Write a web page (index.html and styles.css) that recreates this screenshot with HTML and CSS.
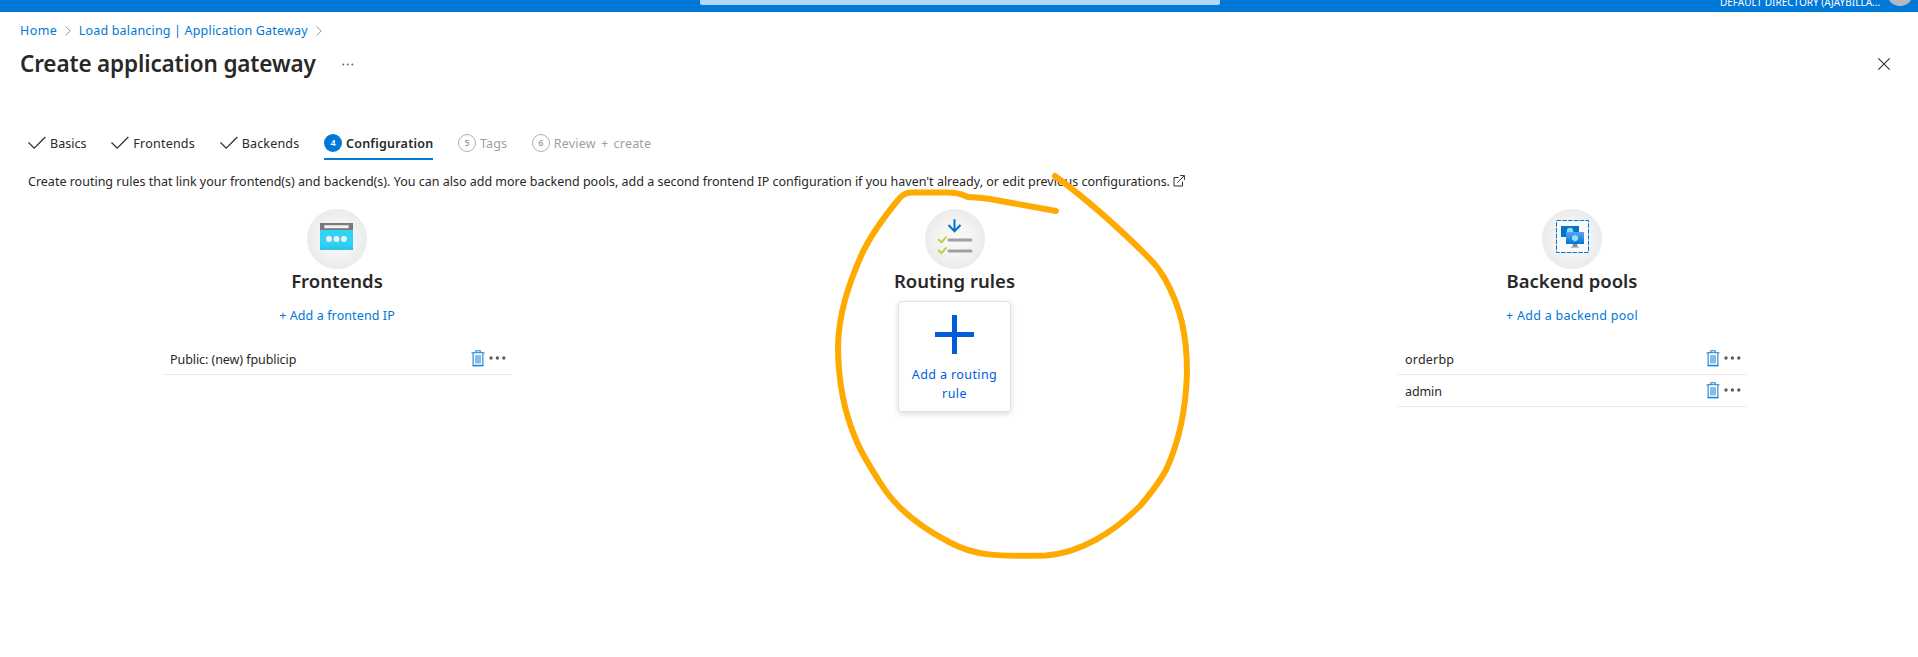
FILE: index.html
```html
<!DOCTYPE html>
<html lang="en">
<head>
<meta charset="utf-8">
<title>Create application gateway</title>
<link rel="stylesheet" href="styles.css">
</head>
<body>
<svg class="defs" aria-hidden="true">
  <defs>
    <radialGradient id="disc"><stop offset="0" stop-color="#f8f8f8"/><stop offset=".5" stop-color="#f5f5f5"/><stop offset="1" stop-color="#ebebeb"/></radialGradient>
    <linearGradient id="cyan" x1="0" y1="0" x2="0" y2="1"><stop offset="0" stop-color="#32d4f5"/><stop offset=".6" stop-color="#32d4f5"/><stop offset="1" stop-color="#2cc3e3"/></linearGradient>
    <linearGradient id="screen" x1="0" y1="1" x2="0" y2="0"><stop offset="0" stop-color="#0078d4"/><stop offset="1" stop-color="#5ea0ef"/></linearGradient>
    <symbol id="trash" viewBox="0 0 14 17"><path d="M2.2 3v12.5h9.6V3" fill="#fff" stroke="#5fa9e4" stroke-width="1.6"/><path d="M4 5h6v8.5H4z" fill="#83bdeb"/><path d="M.5 2.7h13M4.8 2.2V.8h4.4v1.4M1.8 15.6h10.4" fill="none" stroke="#1683d8" stroke-width="1.1"/></symbol>
    <symbol id="dots" viewBox="0 0 17 4"><g fill="#605e5c"><circle cx="2" cy="2" r="1.7"/><circle cx="8.4" cy="2" r="1.7"/><circle cx="14.8" cy="2" r="1.7"/></g></symbol>
    <symbol id="check" viewBox="0 0 18 14"><path d="M.5 6.5L6.2 12.2L17.3 1" fill="none" stroke="#323130" stroke-width="1.3"/></symbol>
    <symbol id="chevron" viewBox="0 0 6 10"><path d="M.6 .5L5.2 5L.6 9.5" fill="none" stroke="#979593" stroke-width="1"/></symbol>
  </defs>
</svg>
<header class="topbar">
  <div class="search"></div>
  <div class="account"><span class="directory">DEFAULT DIRECTORY (AJAYBILLA...</span><span class="avatar"></span></div>
</header>
<nav class="breadcrumb">
  <a class="home">Home</a><svg class="chev"><use href="#chevron"/></svg>
  <a class="parent">Load balancing | Application Gateway</a><svg class="chev"><use href="#chevron"/></svg>
</nav>
<div class="titlebar">
  <h1>Create application gateway</h1>
  <svg class="more" viewBox="0 0 12 3"><g fill="#605e5c"><circle cx="1.3" cy="1.5" r=".9"/><circle cx="5.8" cy="1.5" r=".9"/><circle cx="10.3" cy="1.5" r=".9"/></g></svg>
  <svg class="close" viewBox="0 0 12 12"><path d="M.3 .3L11.7 11.7M11.7 .3L.3 11.7" stroke="#323130" stroke-width="1.1"/></svg>
</div>
<div class="tabs">
  <div class="tab"><svg class="check"><use href="#check"/></svg><span class="t-basics">Basics</span></div>
  <div class="tab"><svg class="check"><use href="#check"/></svg><span class="t-front">Frontends</span></div>
  <div class="tab"><svg class="check"><use href="#check"/></svg><span class="t-back">Backends</span></div>
  <div class="tab active"><i class="step">4</i><span class="t-conf">Configuration</span></div>
  <div class="tab pending"><i class="step">5</i><span class="t-tags">Tags</span></div>
  <div class="tab pending"><i class="step">6</i><span class="t-review">Review + create</span></div>
</div>
<p class="intro"><span class="intro-text">Create routing rules that link your frontend(s) and backend(s). You can also add more backend pools, add a second frontend IP configuration if you haven't already, or edit previous configurations.</span><svg class="external" viewBox="0 0 12 12"><path d="M5.5 2.5H1v8.500h8.500V6.500M7 .6h4.400V5M11.300 .7L4.500 7.500" fill="none" stroke="#323130"/></svg></p>
<main class="columns">
  <section class="column">
    <svg class="disc" viewBox="0 0 60 60"><circle cx="30" cy="30" r="30" fill="url(#disc)"/><path d="M13 14h33v8H13z" fill="#797979"/><path d="M17.3 16.2h24.4v3H17.3z" fill="#f2f2f2"/><path d="M13 21h33v20H13z" fill="url(#cyan)"/><g fill="#f2f2f2"><circle cx="22" cy="30" r="2.9"/><circle cx="29.5" cy="30" r="2.9"/><circle cx="37" cy="30" r="2.9"/></g></svg>
    <h2 class="h-front">Frontends</h2>
    <a class="add a-front">+ Add a frontend IP</a>
    <ul>
      <li><span class="name n-public">Public: (new) fpublicip</span><svg class="trash"><use href="#trash"/></svg><svg class="dots"><use href="#dots"/></svg></li>
    </ul>
  </section>
  <section class="column">
    <svg class="disc" viewBox="0 0 60 60"><circle cx="30" cy="30" r="30" fill="url(#disc)"/><path d="M29.5 10.3v12M23.500 16l6 6.200 6-6.200" fill="none" stroke="#0072c9" stroke-width="2"/><path d="M24 31h22M24 42h22" stroke="#a0a0a0" stroke-width="3" stroke-linecap="round"/><path d="M13.200 30.200l3.300 3.200 5-5.900M13.200 41l3.300 3.200 5-5.900" fill="none" stroke="#b4d333" stroke-width="1.8"/></svg>
    <h2>Routing rules</h2>
    <div class="card"><svg class="plus" viewBox="0 0 39 39"><path d="M19.5 0v39M0 19.500h39" stroke="#015cda" stroke-width="5"/></svg><span class="card-text">Add a routing<br>rule</span></div>
  </section>
  <section class="column">
    <svg class="disc" viewBox="0 0 60 60"><circle cx="30" cy="30" r="30" fill="url(#disc)"/><rect x="14.5" y="11.5" width="32" height="32" fill="#fafafa" stroke="#0078d4" stroke-dasharray="4.6 1.2"/><path d="M19 17h18v11H19z" fill="#0072cf"/><circle cx="28" cy="22" r="3.2" fill="#7ee0f5"/><path d="M24 23h18v12H24z" fill="url(#screen)"/><path d="M33 26l3 1.600v3.200L33 32.500l-3-1.700v-3.200z" fill="#8ee4f7"/><path d="M31 35h4l.5 3h-5z" fill="#888"/><path d="M29 37.600h8v1.200h-8z" fill="#b3b3b3"/></svg>
    <h2 class="h-pools">Backend pools</h2>
    <a class="add a-back">+ Add a backend pool</a>
    <ul>
      <li><span class="name n-order">orderbp</span><svg class="trash"><use href="#trash"/></svg><svg class="dots"><use href="#dots"/></svg></li>
      <li><span class="name n-admin">admin</span><svg class="trash"><use href="#trash"/></svg><svg class="dots"><use href="#dots"/></svg></li>
    </ul>
  </section>
</main>
<svg class="scribble" viewBox="800 160 420 410"><path d="M1056 211L990 199C980 197.500 975 197.500 968 197C963 195 960 192.500 947 192.500H911C905 192.500 901 196 898 200C880 222 869 238 861 256C847 288 839 315 838 345C838 382 844 413 857 442C862 454 872 470 881 484C896 508 920 527 949 542C975 556 995 556.500 1046 555.500C1080 553 1113 533 1140 506C1152 492 1159 483 1166 470C1181 438 1186 405 1187 373C1187 335 1181 308 1165 279C1161 272 1155 264 1149 258C1117 226 1085 198 1055 176" fill="none" stroke="#ffaa01" stroke-width="6" stroke-linecap="round" stroke-linejoin="round"/></svg>
</body>
</html>
```
FILE: styles.css
```css
* { box-sizing: border-box; }
body { margin: 0; height: 657px; overflow: hidden; background: #fff; color: #292827; font: 12.5px/20px "Noto Sans", "Open Sans", sans-serif; position: relative; }
svg { display: block; flex: none; }
.defs { position: absolute; width: 0; height: 0; }
a { color: #0078d4; }
span, h1, h2, a { white-space: nowrap; }
.topbar { height: 12px; background: #0078d7; overflow: hidden; display: flex; padding-left: 700px; }
.search { width: 520px; height: 5px; background: #b3d6f2; border-radius: 0 0 2px 2px; }
.account { margin-left: auto; display: flex; width: 198px; }
.directory { color: #fff; font-size: 10px; line-height: 14px; margin-top: -5px; width: 167px; height: 14px; }
.avatar { width: 26px; height: 26px; border-radius: 50%; background: #b5b9bd; margin-top: -20px; }
.breadcrumb { display: flex; align-items: center; height: 36px; padding: 1px 0 0 20px; }
.home { letter-spacing: .4px; }
.parent { letter-spacing: .18px; }
.chev { width: 6px; height: 10px; margin: 1px 7.8px 0; }
.titlebar { display: flex; align-items: center; height: 32px; padding: 0 28px 0 20px; }
h1 { margin: 0; font-size: 22.5px; line-height: 32px; font-weight: 600; letter-spacing: -.15px; width: 322px; }
.more { width: 12px; height: 3px; }
.close { width: 12px; height: 12px; margin-left: auto; }
.tabs { display: flex; margin: 48px 0 0 28px; height: 32px; gap: 24.7px; }
.tab { display: flex; align-items: center; height: 32px; }
.check { width: 18px; height: 14px; margin: -2px 4px 0 0; }
.step { width: 18px; height: 18px; border-radius: 50%; margin: -2px 4px 0 0; font: 600 9px/18px "Noto Sans", sans-serif; text-align: center; color: #fff; background: #0078d7; flex: none; }
.active { font-weight: 600; border-bottom: 2px solid #0078d4; }
.active .step { margin-top: 0; }
.active span { padding-top: 2px; }
.pending { color: #a19f9d; }
.pending .step { background: #fff; color: #a19f9d; border: 1px solid #b3b0ad; line-height: 16px; }
.t-basics { letter-spacing: .05px; }
.t-front, .t-conf { letter-spacing: .22px; }
.t-tags { letter-spacing: .1px; }
.t-back { letter-spacing: .18px; }
.t-review { letter-spacing: .2px; word-spacing: 1.8px; }
.intro { display: flex; align-items: center; margin: 12px 0 0 28px; height: 20px; }
.external { width: 12px; height: 12px; margin: -3px 0 0 3px; }
.columns { display: flex; gap: 267.5px; padding: 17px 0 0 162px; }
.column { width: 350px; display: flex; flex-direction: column; align-items: center; }
.disc { width: 60px; height: 60px; }
h2 { margin: 0; font-size: 18.5px; line-height: 24px; font-weight: 600; }
.add { margin-top: 13px; letter-spacing: .1px; }
.a-back { letter-spacing: .27px; }
ul { list-style: none; margin: 17px 0 0; padding: 0; width: 100%; }
li { display: flex; align-items: center; height: 32px; border-bottom: 1px solid #edebe9; padding: 0 5px 0 8px; }
.name { padding-top: 3px; }
.n-public { letter-spacing: -.07px; }
.n-order { letter-spacing: .2px; }
.n-admin { letter-spacing: -.1px; }
.trash { width: 14px; height: 17px; margin: -1px 0 0 auto; }
.dots { width: 17px; height: 4px; margin: -2px 1px 0 4px; }
.card { width: 113px; height: 111px; margin-top: 8px; border: 1px solid #e1e1e1; border-radius: 4px; box-shadow: 0 2px 6px rgba(0,0,0,.14); display: flex; flex-direction: column; align-items: center; padding-top: 13px; color: #015cda; }
.plus { width: 39px; height: 39px; }
.card-text { text-align: center; line-height: 19px; margin-top: 11px; letter-spacing: .4px; }
.scribble { position: absolute; left: 800px; top: 160px; width: 420px; height: 410px; }
```
